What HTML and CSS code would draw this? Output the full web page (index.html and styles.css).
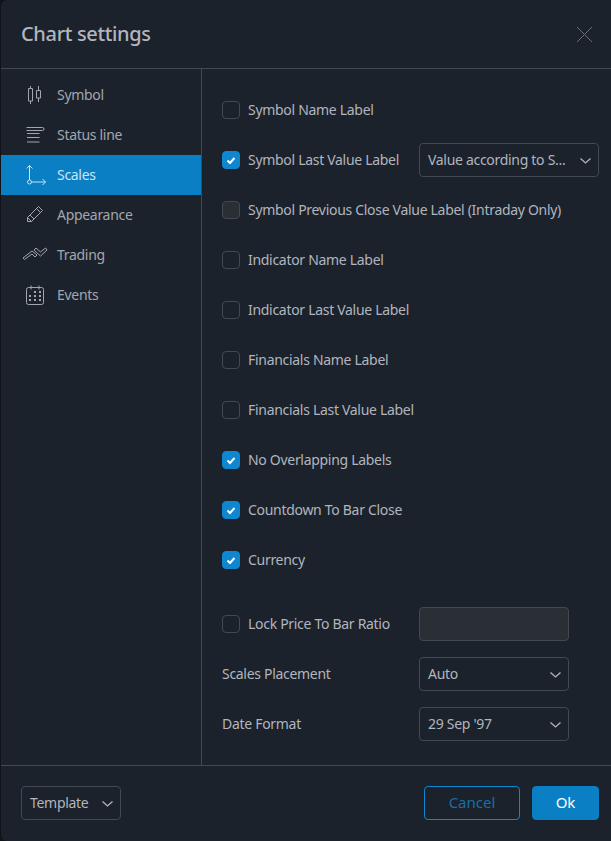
FILE: index.html
```html
<!DOCTYPE html>
<html lang="en">
<head>
  <meta charset="UTF-8">
  <title>Chart settings</title>
  <link rel="stylesheet" href="styles.css">
</head>
<body>
  <div class="dialog">
    <div class="header">
      <h2>Chart settings</h2>
      <svg class="close" width="17" height="17" viewBox="0 0 17 17"><path d="M1 1l15 15M16 1L1 16"/></svg>
    </div>

    <div class="main">
      <div class="sidebar">
        <div class="tab">
          <svg width="28" height="28" viewBox="0 0 28 28"><path d="M9.500 5v2M9.500 20v3M7.500 7.500h4v12.500h-4zM17.500 5v4M17.500 17v4M15.500 9.500h4v7.500h-4z"/></svg>
          <span>Symbol</span>
        </div>
        <div class="tab">
          <svg width="28" height="28" viewBox="0 0 28 28"><path d="M5.500 6.500h16a1.500 1.500 0 0 1 0 3h-16M6 12.500h12.500M6 16.500h12.500M6 21h12.500"/></svg>
          <span>Status line</span>
        </div>
        <div class="tab active">
          <svg width="28" height="28" viewBox="0 0 28 28"><path d="M8.500 4.500v14.500M5.500 7.500l3-3 3 3M10.500 21h14M21.500 18l3 3-3 3"/><circle cx="8.500" cy="21" r="2"/></svg>
          <span>Scales</span>
        </div>
        <div class="tab">
          <svg width="28" height="28" viewBox="0 0 28 28"><path d="M6.500 20.500v-4L17.500 5.500l4 4-11 11zM6.500 16.500l4 4M15.500 7.500l4 4M9 14l4 4"/></svg>
          <span>Appearance</span>
        </div>
        <div class="tab">
          <svg width="28" height="28" viewBox="0 0 28 28"><path d="M2 17l9-7 5 4-2 2-3-3-7.500 5.500zM13 9l2-2 4.500 4 5-4 1.500 2-6.500 6z"/></svg>
          <span>Trading</span>
        </div>
        <div class="tab">
          <svg width="28" height="28" viewBox="0 0 28 28"><path d="M7.500 6.500h13a2 2 0 0 1 2 2v13a2 2 0 0 1-2 2h-13a2 2 0 0 1-2-2v-13a2 2 0 0 1 2-2zM10 4.500v4M18 4.500v4"/><g class="dots"><rect x="13" y="10" width="2" height="2"/><rect x="18" y="10" width="2" height="2"/><rect x="8" y="14" width="2" height="2"/><rect x="13" y="14" width="2" height="2"/><rect x="18" y="14" width="2" height="2"/><rect x="8" y="18" width="2" height="2"/><rect x="13" y="18" width="2" height="2"/><rect x="18" y="18" width="2" height="2"/></g></svg>
          <span>Events</span>
        </div>
      </div>

      <div class="content">
        <div class="checks">
          <div class="row"><span class="box"></span><label>Symbol Name Label</label></div>
          <div class="row">
            <span class="box on"><svg width="18" height="18" viewBox="0 0 18 18"><path d="M5.500 9.500l2.500 2.500 4.500-5"/></svg></span>
            <label class="fixed">Symbol Last Value Label</label>
            <div class="select wide"><span>Value according to S...</span><svg width="11" height="6" viewBox="0 0 11 6"><path d="M.5.500l5 4.500 5-4.500"/></svg></div>
          </div>
          <div class="row"><span class="box off"></span><label>Symbol Previous Close Value Label (Intraday Only)</label></div>
          <div class="row"><span class="box"></span><label>Indicator Name Label</label></div>
          <div class="row"><span class="box"></span><label>Indicator Last Value Label</label></div>
          <div class="row"><span class="box"></span><label>Financials Name Label</label></div>
          <div class="row"><span class="box"></span><label>Financials Last Value Label</label></div>
          <div class="row">
            <span class="box on"><svg width="18" height="18" viewBox="0 0 18 18"><path d="M5.500 9.500l2.500 2.500 4.500-5"/></svg></span>
            <label>No Overlapping Labels</label>
          </div>
          <div class="row">
            <span class="box on"><svg width="18" height="18" viewBox="0 0 18 18"><path d="M5.500 9.500l2.500 2.500 4.500-5"/></svg></span>
            <label>Countdown To Bar Close</label>
          </div>
          <div class="row">
            <span class="box on"><svg width="18" height="18" viewBox="0 0 18 18"><path d="M5.500 9.500l2.500 2.500 4.500-5"/></svg></span>
            <label>Currency</label>
          </div>
        </div>

        <div class="checks extra">
          <div class="row">
            <span class="box"></span>
            <label class="fixed">Lock Price To Bar Ratio</label>
            <div class="select blank"></div>
          </div>
          <div class="row">
            <label class="plain">Scales Placement</label>
            <div class="select"><span>Auto</span><svg width="11" height="6" viewBox="0 0 11 6"><path d="M.5.500l5 4.500 5-4.500"/></svg></div>
          </div>
          <div class="row">
            <label class="plain">Date Format</label>
            <div class="select"><span>29 Sep '97</span><svg width="11" height="6" viewBox="0 0 11 6"><path d="M.5.500l5 4.500 5-4.500"/></svg></div>
          </div>
        </div>
      </div>
    </div>

    <div class="footer">
      <div class="select template"><span>Template</span><svg width="11" height="6" viewBox="0 0 11 6"><path d="M.5.500l5 4.500 5-4.500"/></svg></div>
      <div class="buttons">
        <button class="btn cancel">Cancel</button>
        <button class="btn ok">Ok</button>
      </div>
    </div>
  </div>
</body>
</html>
```

FILE: styles.css
```css
html, body {
  margin: 0;
  padding: 0;
  height: 100%;
  background: #10141a;
  overflow: hidden;
}

.dialog {
  margin-left: 1px;
  height: 841px;
  display: flex;
  flex-direction: column;
  background: #1b222b;
  border-radius: 6px 0 0 6px;
  color: #b2b5be;
  font-family: "Noto Sans", sans-serif;
  font-size: 14px;
  letter-spacing: -0.3px;
}

svg {
  display: block;
  fill: none;
  stroke: currentColor;
  stroke-width: 1;
}

/* Noto sits a pixel low next to the icons and boxes */
label,
.tab span,
.select span {
  padding-bottom: 2px;
}

/* Header */
.header {
  height: 69px;
  flex: none;
  box-sizing: border-box;
  padding: 0 18px 0 20px;
  display: flex;
  align-items: center;
  justify-content: space-between;
  border-bottom: 1px solid #434951;
}

h2 {
  margin: 0;
  padding-bottom: 2px;
  font-size: 20px;
  font-weight: 500;
  letter-spacing: -0.35px;
  color: #b2b5be;
}

.close {
  color: #6a6f78;
}

/* Sidebar and content */
.main {
  flex: 1;
  display: flex;
  min-height: 0;
}

.sidebar {
  width: 200px;
  flex: none;
  padding-top: 6px;
  border-right: 1px solid #434951;
}

.tab {
  height: 40px;
  display: flex;
  align-items: center;
  gap: 8px;
  padding-left: 20px;
  color: #a3a6af;
}

.tab.active {
  background: #0b7fc4;
  color: #c9e4f5;
}

.dots rect {
  fill: currentColor;
  stroke: none;
}

.content {
  flex: 1;
  padding: 24px 12px 0 20px;
}

.checks {
  display: flex;
  flex-direction: column;
  gap: 16px;
}

.extra {
  margin-top: 30px;
}

.row {
  height: 34px;
  display: flex;
  align-items: center;
}

.box {
  width: 18px;
  height: 18px;
  flex: none;
  box-sizing: border-box;
  border: 1px solid #434951;
  border-radius: 4px;
  margin-right: 8px;
}

.box.off {
  background: #2a2e35;
}

.box.on {
  background: #0f86d0;
  border-color: #0f86d0;
  color: #fff;
}

.box.on svg {
  margin: -1px;
  stroke-width: 2;
}

label {
  white-space: nowrap;
}

.fixed {
  width: 171px;
}

.plain {
  width: 197px;
}

.select {
  width: 150px;
  height: 34px;
  box-sizing: border-box;
  border: 1px solid #434951;
  border-radius: 4px;
  padding: 0 7px 0 8px;
  display: flex;
  align-items: center;
  justify-content: space-between;
}

.select svg {
  margin-top: 2px;
  stroke-width: 1.3;
}

.select.wide {
  width: 180px;
}

.select.blank {
  background: #2a2e35;
}

/* Footer */
.footer {
  height: 76px;
  flex: none;
  box-sizing: border-box;
  padding: 20px 12px 0 20px;
  border-top: 1px solid #434951;
  display: flex;
  justify-content: space-between;
}

.select.template {
  width: 100px;
}

.buttons {
  display: flex;
  gap: 12px;
}

.btn {
  height: 34px;
  box-sizing: border-box;
  border-radius: 4px;
  border: 1px solid #0f86d0;
  padding-bottom: 3px;
  font-family: inherit;
  font-size: 15px;
}

.cancel {
  width: 96px;
  background: transparent;
  color: #1a6ea6;
}

.ok {
  width: 67px;
  background: #0b7fc4;
  border-color: #0b7fc4;
  color: #fff;
}
```
